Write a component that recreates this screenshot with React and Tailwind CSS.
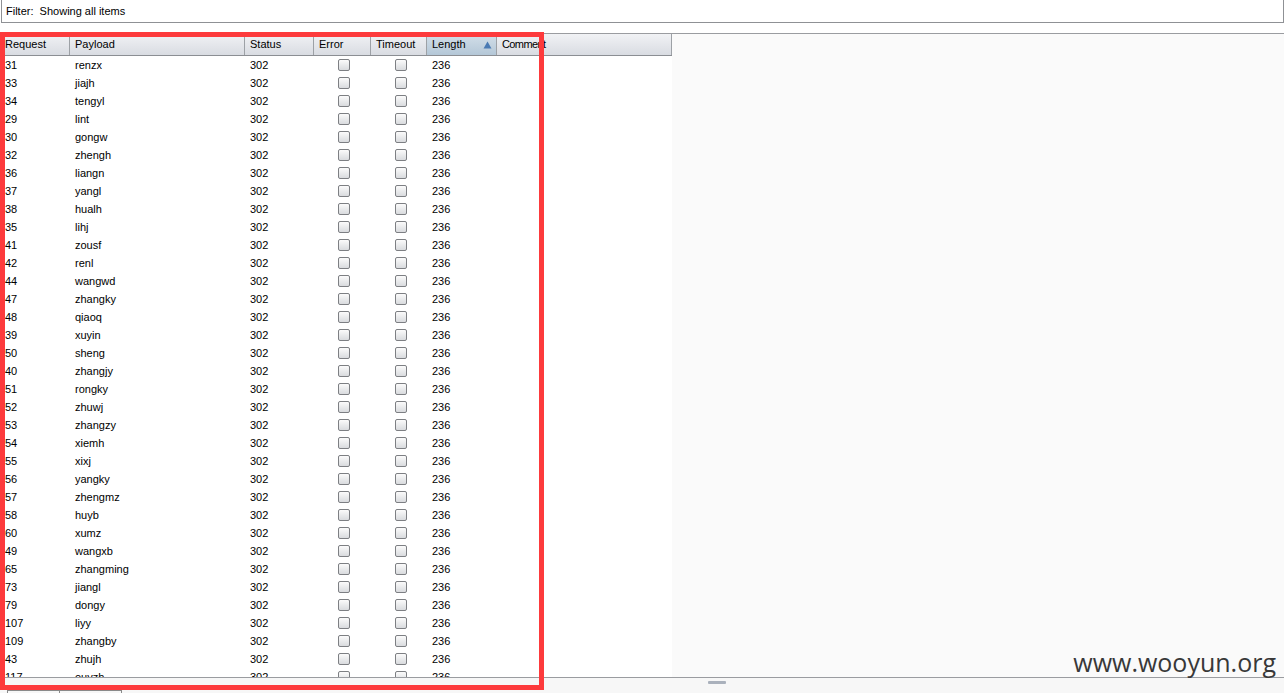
import React from "react";

const rows = [
  ["31", "renzx"], ["33", "jiajh"], ["34", "tengyl"], ["29", "lint"], ["30", "gongw"],
  ["32", "zhengh"], ["36", "liangn"], ["37", "yangl"], ["38", "hualh"], ["35", "lihj"],
  ["41", "zousf"], ["42", "renl"], ["44", "wangwd"], ["47", "zhangky"], ["48", "qiaoq"],
  ["39", "xuyin"], ["50", "sheng"], ["40", "zhangjy"], ["51", "rongky"], ["52", "zhuwj"],
  ["53", "zhangzy"], ["54", "xiemh"], ["55", "xixj"], ["56", "yangky"], ["57", "zhengmz"],
  ["58", "huyb"], ["60", "xumz"], ["49", "wangxb"], ["65", "zhangming"], ["73", "jiangl"],
  ["79", "dongy"], ["107", "liyy"], ["109", "zhangby"], ["43", "zhujh"], ["117", "ouyzh"],
];

function Check() {
  return (
    <div className="w-[12px] h-[12px] rounded-[2px] border border-[#7d7f83] bg-gradient-to-b from-[#fbfbfb] to-[#d9dbde]" />
  );
}

function HeadCell({ w, children, sorted }) {
  return (
    <div
      className={
        "h-full flex items-center pl-[5px] border-r border-[#9da1a6] overflow-hidden whitespace-nowrap shrink-0 " +
        (sorted
          ? "bg-gradient-to-b from-[#d3dfe9] to-[#b4c7d7] justify-between pr-[4px]"
          : "bg-gradient-to-b from-[#f1f2f5] to-[#d9dce2]")
      }
      style={{ width: w }}
    >
      {children}
    </div>
  );
}

export default function App() {
  return (
    <div className="relative w-[1284px] h-[693px] bg-white overflow-hidden font-['Liberation_Sans',Arial,sans-serif] text-[11px] text-black leading-none">
      {/* Filter bar */}
      <div className="h-[23px] ml-px border-l border-r border-b border-[#8f9195] flex items-center pl-[4px] bg-white">
        Filter:&nbsp; Showing all items
      </div>
      <div className="h-[10px] bg-white" />

      {/* Table scroll area */}
      <div className="h-[645px] border-t border-b border-[#9a9ca0] flex">
        <div className="w-[672px] bg-white flex flex-col overflow-hidden">
          <div className="h-[22px] flex border-b border-[#8b8e93] shrink-0">
            <HeadCell w={70}>Request</HeadCell>
            <HeadCell w={175}>Payload</HeadCell>
            <HeadCell w={69}>Status</HeadCell>
            <HeadCell w={57}>Error</HeadCell>
            <HeadCell w={56}>Timeout</HeadCell>
            <HeadCell w={70} sorted>
              <span>Length</span>
              <svg width="9" height="8" viewBox="0 0 9 8">
                <path d="M4.5 0.5 L8.5 7.5 L0.5 7.5 Z" fill="#4a7ab3" />
              </svg>
            </HeadCell>
            <HeadCell w={175}>
              <span className="tracking-[-0.6px]">Comment</span>
            </HeadCell>
          </div>
          <div className="flex flex-col">
            {rows.map(([req, pay]) => (
              <div key={req + pay} className="h-[18px] flex items-center shrink-0 whitespace-nowrap">
                <div className="w-[70px] pl-[5px] shrink-0">{req}</div>
                <div className="w-[175px] pl-[5px] shrink-0">{pay}</div>
                <div className="w-[69px] pl-[5px] shrink-0">302</div>
                <div className="w-[57px] flex justify-center pl-[3px] shrink-0"><Check /></div>
                <div className="w-[56px] flex justify-center pl-[3px] shrink-0"><Check /></div>
                <div className="w-[70px] pl-[5px] shrink-0">236</div>
                <div className="w-[175px] shrink-0" />
              </div>
            ))}
          </div>
        </div>
        <div className="flex-1 bg-[#fafafa]" />
      </div>

      {/* Bottom split area */}
      <div className="relative h-[15px] bg-[#f7f7f7]">
        <div className="absolute left-[708px] top-[3px] w-[18px] h-[3px] rounded-[1px] bg-[#aab1bc]" />
        <div className="flex pl-[7px] pt-[12px]">
          <div className="w-[53px] h-[3px] border-l border-t border-r border-[#8a8a8a]" />
          <div className="w-[62px] h-[3px] border-t border-r border-[#8a8a8a]" />
        </div>
      </div>

      {/* Red annotation box */}
      <div className="absolute left-0 top-[32px] w-[544px] h-[658px] border-[5px] border-[#fd3a3c] pointer-events-none" />

      {/* Watermark */}
      <div className="absolute right-[8px] top-[647px] text-[25px] leading-[30px] text-[#383838] font-['Open_Sans','Noto_Sans',sans-serif]">
        www.wooyun.org
      </div>
    </div>
  );
}
